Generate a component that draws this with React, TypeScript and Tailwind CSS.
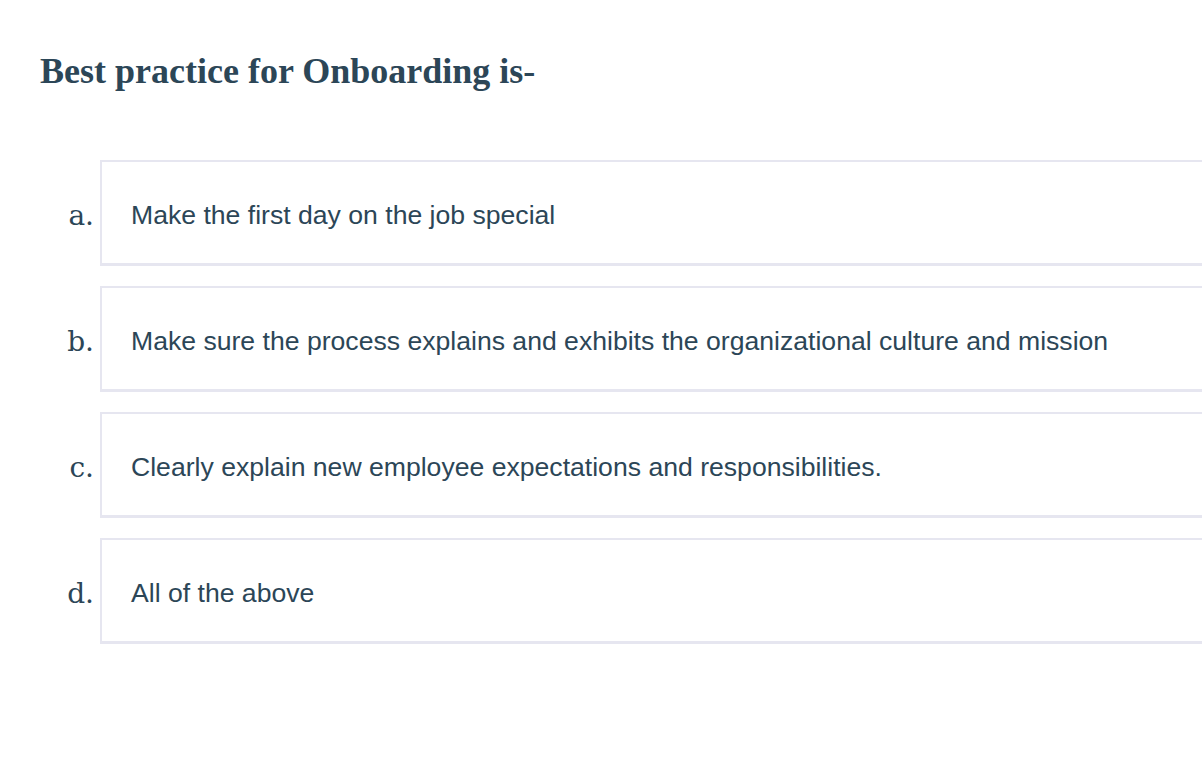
const options = [
  { letter: 'a.', text: 'Make the first day on the job special' },
  { letter: 'b.', text: 'Make sure the process explains and exhibits the organizational culture and mission' },
  { letter: 'c.', text: 'Clearly explain new employee expectations and responsibilities.' },
  { letter: 'd.', text: 'All of the above' },
]

export default function App() {
  return (
    <div className="min-h-screen w-full overflow-hidden bg-white text-[#2c4657]">
      {/* Question */}
      <h1
        className="pl-10 pt-[47px] text-[36px] font-bold leading-[48px]"
        style={{ fontFamily: '"Liberation Serif", "Times New Roman", serif' }}
      >
        Best practice for Onboarding is-
      </h1>

      {/* Answers */}
      <div className="mt-[65px] flex flex-col gap-5 pl-10">
        {options.map((o) => (
          <div key={o.letter} className="flex items-center">
            <span
              className="w-[60px] shrink-0 pr-[6px] pt-[5px] text-right text-[28px]"
              style={{ fontFamily: '"DejaVu Serif", Georgia, serif' }}
            >
              {o.letter}
            </span>
            <div className="flex h-[106px] w-[1140px] shrink-0 items-center border-2 border-b-[3px] border-[#e6e6f0] pl-[29px]">
              <span
                className="pt-[6px] text-[26.6px]"
                style={{ fontFamily: '"Liberation Sans", Arial, sans-serif' }}
              >
                {o.text}
              </span>
            </div>
          </div>
        ))}
      </div>
    </div>
  )
}
